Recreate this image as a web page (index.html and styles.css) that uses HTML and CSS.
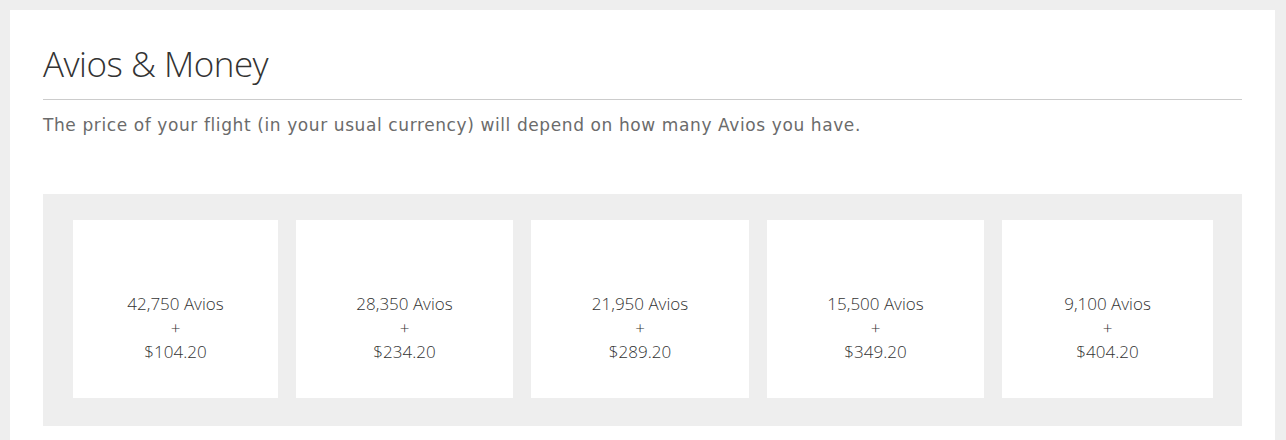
FILE: index.html
```html
<!DOCTYPE html>
<html lang="en">
<head>
<meta charset="utf-8">
<title>Avios &amp; Money</title>
<link rel="stylesheet" href="styles.css">
</head>
<body>
<main class="panel">
  <h1 class="title">Avios &amp; Money</h1>
  <p class="intro">The price of your flight (in your usual currency) will depend on how many Avios you have.</p>
  <section class="options">
    <div class="card"><span>42,750 Avios</span><span>+</span><span>$104.20</span></div>
    <div class="card"><span>28,350 Avios</span><span>+</span><span>$234.20</span></div>
    <div class="card"><span>21,950 Avios</span><span>+</span><span>$289.20</span></div>
    <div class="card"><span>15,500 Avios</span><span>+</span><span>$349.20</span></div>
    <div class="card"><span>9,100 Avios</span><span>+</span><span>$404.20</span></div>
  </section>
</main>
</body>
</html>
```
FILE: styles.css
```css
html, body {
  margin: 0;
  padding: 0;
}
body {
  background: #eeeeee;
  padding: 10px 11px 0 10px;
  height: 440px;
  box-sizing: border-box;
  overflow: hidden;
}
.panel {
  background: #ffffff;
  padding: 34px 33px 20px 33px;
  min-height: 430px;
  box-sizing: border-box;
}
.title {
  margin: 0;
  font-family: "Open Sans", sans-serif;
  font-weight: 300;
  font-size: 35px;
  line-height: 40px;
  color: #333333;
  letter-spacing: -0.5px;
  padding-bottom: 15px;
  border-bottom: 1px solid #cccccc;
}
.intro {
  margin: 13px 0 0 0;
  font-family: "DejaVu Sans", Verdana, sans-serif;
  font-size: 17px;
  letter-spacing: 0.6px;
  line-height: 24px;
  color: #6b6b6b;
}
.options {
  margin-top: 57px;
  background: #eeeeee;
  padding: 26px 29px 28px 30px;
  display: grid;
  grid-template-columns: 205px 217px 218px 217px 211px;
  column-gap: 18px;
}
.card {
  background: #ffffff;
  height: 178px;
  display: flex;
  flex-direction: column;
  align-items: center;
  justify-content: flex-start;
  padding-top: 72px;
  box-sizing: border-box;
  font-family: "Open Sans", sans-serif;
  font-weight: 300;
  font-size: 17px;
  line-height: 24px;
  color: #333333;
}
```
